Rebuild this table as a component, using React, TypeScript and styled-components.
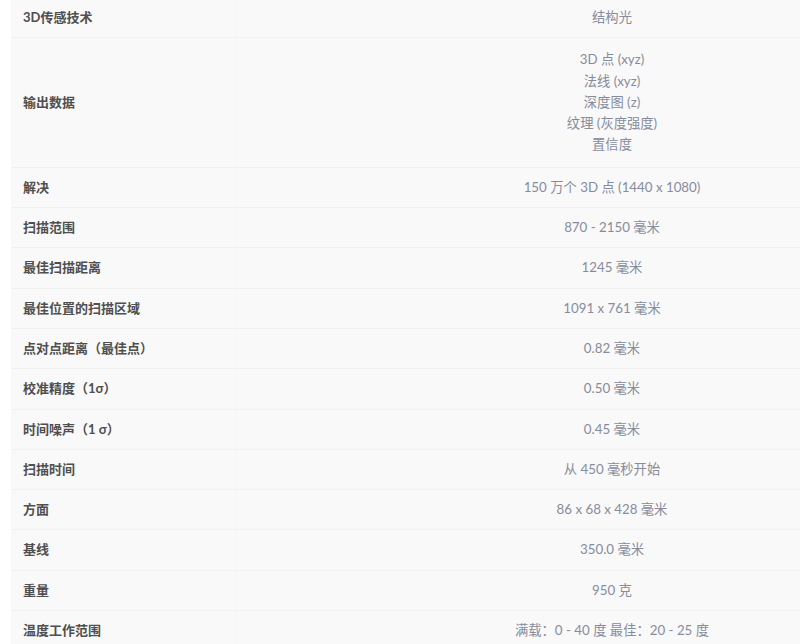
import styled, { createGlobalStyle } from 'styled-components';

const GlobalStyle = createGlobalStyle`
  html, body {
    margin: 0;
    padding: 0;
    background: #ffffff;
    overflow: hidden;
  }
  body {
    font-family: 'Lato', 'Noto Sans CJK SC', sans-serif;
  }
`;

const Page = styled.div`
  width: 800px;
  height: 644px;
  overflow: hidden;
  padding-left: 11px;
  box-sizing: border-box;
`;

const Table = styled.div`
  width: 977px;
  margin-top: -2px;
  background: #f9f9f9;
  display: grid;
  grid-template-columns: 225px 752px;
`;

const Label = styled.div`
  padding: 9px 12px;
  line-height: 21.3px;
  font-size: 13px;
  font-weight: 700;
  color: #4f4f4f;
  border-bottom: 1px solid #f1f1f1;
  border-right: 1px solid #f6f6f6;
  display: flex;
  align-items: center;
`;

const Value = styled.div<{ $multi?: boolean }>`
  padding: ${(p) => (p.$multi ? '11px 12px' : '9px 12px')};
  line-height: 21.3px;
  font-size: 13.3px;
  color: #878c9c;
  text-align: center;
  border-bottom: 1px solid #f1f1f1;
  display: flex;
  flex-direction: column;
  justify-content: center;
`;

const rows: [string, string[]][] = [
  ['3D传感技术', ['结构光']],
  ['输出数据', ['3D 点 (xyz)', '法线 (xyz)', '深度图 (z)', '纹理 (灰度强度)', '置信度']],
  ['解决', ['150 万个 3D 点 (1440 x 1080)']],
  ['扫描范围', ['870 - 2150 毫米']],
  ['最佳扫描距离', ['1245 毫米']],
  ['最佳位置的扫描区域', ['1091 x 761 毫米']],
  ['点对点距离（最佳点）', ['0.82 毫米']],
  ['校准精度（1σ）', ['0.50 毫米']],
  ['时间噪声（1 σ）', ['0.45 毫米']],
  ['扫描时间', ['从 450 毫秒开始']],
  ['方面', ['86 x 68 x 428 毫米']],
  ['基线', ['350.0 毫米']],
  ['重量', ['950 克']],
  ['温度工作范围', ['满载：0 - 40 度 最佳：20 - 25 度']],
];

const App = () => {
  return (
    <Page>
      <GlobalStyle />
      <Table>
        {rows.map(([label, values]) => (
          <>
            <Label key={label + '-l'}>{label}</Label>
            <Value key={label + '-v'} $multi={values.length > 1}>
              {values.map((v) => (
                <span key={v}>{v}</span>
              ))}
            </Value>
          </>
        ))}
      </Table>
    </Page>
  );
};

export default App;
